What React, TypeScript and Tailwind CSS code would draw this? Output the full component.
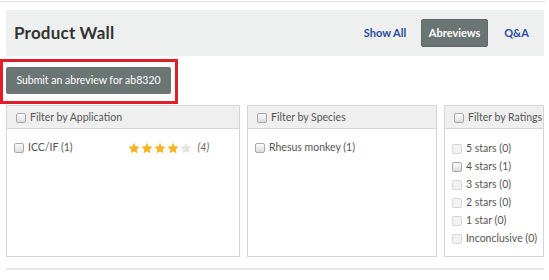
const Box = ({ faded = false }: { faded?: boolean }) => (
  <span
    className={`inline-block h-[10px] w-[10px] shrink-0 rounded-[2px] border ${
      faded
        ? "border-[#d6d6d6] bg-[#f3f3f3]"
        : "border-[#a9a9a9] bg-gradient-to-b from-[#fbfbfb] to-[#dcdcdc]"
    }`}
  />
);

const Star = ({ on }: { on: boolean }) => (
  <svg width="12" height="12" viewBox="0 0 24 23" className="shrink-0">
    <path
      d="M12 0.8l3.4 7 7.7 1.1-5.6 5.4 1.3 7.6L12 18.3l-6.8 3.6 1.3-7.6L0.9 8.9l7.7-1.1z"
      fill={on ? "#f4b52c" : "#e4e4e4"}
    />
  </svg>
);

const ratings = [
  { label: "5 stars (0)", on: false },
  { label: "4 stars (1)", on: true },
  { label: "3 stars (0)", on: false },
  { label: "2 stars (0)", on: false },
  { label: "1 star (0)", on: false },
  { label: "Inconclusive (0)", on: false },
];

const Panel = ({
  title,
  className,
  children,
}: {
  title: string;
  className: string;
  children: React.ReactNode;
}) => (
  <div className={`flex flex-col border border-[#d6d6d6] ${className}`}>
    <div className="flex h-[23px] items-center gap-[4px] whitespace-nowrap border-b border-[#d6d6d6] bg-[#efefef] pl-[9px] pt-[2px] text-[10.5px] text-[#555]">
      <Box />
      <span>{title}</span>
    </div>
    <div className="flex-1 pl-[7px] pr-[2px] pt-[11px]">{children}</div>
  </div>
);

export default function App() {
  return (
    <div
      className="h-[280px] w-[549px] overflow-hidden bg-white"
      style={{ fontFamily: "Lato, 'Liberation Sans', sans-serif" }}
    >
      <div className="mt-px w-[545px] border-t border-[#dcdcdc]" />

      <div className="ml-[6px] mt-[8px] flex h-[46px] w-[538px] items-center justify-between bg-[#eeefef] pl-[8px] pr-[15px]">
        <h2 className="text-[17px] font-bold tracking-[0.2px] text-[#333]">
          Product Wall
        </h2>
        <nav className="flex items-center text-[11px] font-bold">
          <a className="mr-[15px] text-[#2b4c9c]">Show All</a>
          <a className="flex h-[28px] w-[67px] items-center justify-center rounded-[2px] border border-[#5f6968] bg-[#6b7574] text-white">
            Abreviews
          </a>
          <a className="ml-[16px] text-[#2b4c9c]">Q&amp;A</a>
        </nav>
      </div>

      <div className="mt-[3px] h-[45px] w-[178px] border-[3px] border-[#e31e27] pl-[3px] pt-[5px]">
        <button className="flex h-[27px] w-[165px] items-center justify-center rounded-[2px] bg-[#6b7574] text-[10.5px] text-white">
          Submit an abreview for ab8320
        </button>
      </div>

      <div className="ml-[6px] mt-[1px] flex h-[152px] w-[538px] gap-[7px] text-[10.5px] text-[#555]">
        <Panel title="Filter by Application" className="w-[234px]">
          <div className="flex items-center">
            <label className="flex items-center gap-[4px]">
              <Box />
              ICC/IF (1)
            </label>
            <div className="ml-[55px] flex items-center gap-[1px]">
              {[true, true, true, true, false].map((on, i) => (
                <Star key={i} on={on} />
              ))}
              <span className="ml-[5px] italic text-[#666]">(4)</span>
            </div>
          </div>
        </Panel>
        <Panel title="Filter by Species" className="w-[190px]">
          <label className="flex items-center gap-[4px]">
            <Box />
            Rhesus monkey (1)
          </label>
        </Panel>
        <Panel title="Filter by Ratings" className="w-[100px]">
          <ul className="flex flex-col gap-[6px] whitespace-nowrap pt-[3px]">
            {ratings.map((r) => (
              <li key={r.label} className="flex h-[12px] items-center gap-[4px]">
                <Box faded={!r.on} />
                {r.label}
              </li>
            ))}
          </ul>
        </Panel>
      </div>

      <div className="ml-[6px] mt-[11px] w-[538px] border-t-2 border-[#e6e6e6]" />
    </div>
  );
}
